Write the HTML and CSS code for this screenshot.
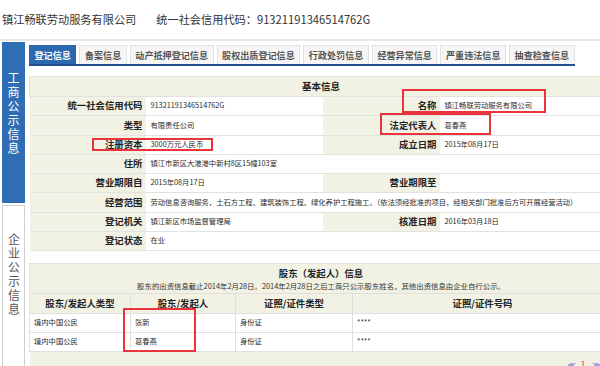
FILE: index.html
```html
<!DOCTYPE html>
<html lang="zh-CN">
<head>
    <meta charset="UTF-8">
    <title>镇江畅联劳动服务有限公司</title>
    <link rel="stylesheet" href="styles.css">
</head>
<body>
    <div class="page">
        <div class="top">
            <span>镇江畅联劳动服务有限公司</span><span class="code">统一社会信用代码：91321191346514762G</span>
        </div>
        <div class="layout">
            <div class="side">
                <div class="side-box side-on">工商公示信息</div>
                <div class="side-box side-off">企业公示信息</div>
            </div>
            <div class="main">
                <div class="tabs">
                    <span class="tab tab-on">登记信息</span>
                    <span class="tab">备案信息</span>
                    <span class="tab">动产抵押登记信息</span>
                    <span class="tab">股权出质登记信息</span>
                    <span class="tab">行政处罚信息</span>
                    <span class="tab">经营异常信息</span>
                    <span class="tab">严重违法信息</span>
                    <span class="tab">抽查检查信息</span>
                </div>

                <table class="info">
                    <colgroup>
                        <col class="c-l1"><col class="c-v1"><col class="c-l2"><col class="c-v2">
                    </colgroup>
                    <tr class="head"><th colspan="4">基本信息</th></tr>
                    <tr>
                        <td class="lbl">统一社会信用代码</td><td class="val">91321191346514762G</td>
                        <td class="lbl">名称</td><td class="val">镇江畅联劳动服务有限公司</td>
                    </tr>
                    <tr>
                        <td class="lbl">类型</td><td class="val">有限责任公司</td>
                        <td class="lbl">法定代表人</td><td class="val">葛春燕</td>
                    </tr>
                    <tr>
                        <td class="lbl">注册资本</td><td class="val">3000万元人民币</td>
                        <td class="lbl">成立日期</td><td class="val">2015年08月17日</td>
                    </tr>
                    <tr>
                        <td class="lbl">住所</td><td class="val" colspan="3">镇江市新区大港港中新村8区15幢103室</td>
                    </tr>
                    <tr>
                        <td class="lbl">营业期限自</td><td class="val">2015年08月17日</td>
                        <td class="lbl">营业期限至</td><td class="val"></td>
                    </tr>
                    <tr>
                        <td class="lbl">经营范围</td><td class="val" colspan="3">劳动信息咨询服务，土石方工程、建筑装饰工程、绿化养护工程施工。（依法须经批准的项目，经相关部门批准后方可开展经营活动）</td>
                    </tr>
                    <tr>
                        <td class="lbl">登记机关</td><td class="val">镇江新区市场监督管理局</td>
                        <td class="lbl">核准日期</td><td class="val">2016年03月18日</td>
                    </tr>
                    <tr>
                        <td class="lbl">登记状态</td><td class="val" colspan="3">在业</td>
                    </tr>
                </table>

                <table class="holders">
                    <colgroup>
                        <col class="h-1"><col class="h-2"><col class="h-3"><col class="h-4">
                    </colgroup>
                    <tr class="title">
                        <th colspan="4">
                            <div class="title-main">股东（发起人）信息</div>
                            <div class="title-note">股东的出资信息截止2014年2月28日。2014年2月28日之后工商只公示股东姓名，其他出资信息由企业自行公示。</div>
                        </th>
                    </tr>
                    <tr class="cols">
                        <th>股东/发起人类型</th><th>股东/发起人</th><th>证照/证件类型</th><th>证照/证件号码</th>
                    </tr>
                    <tr class="row">
                        <td>境内中国公民</td><td>张新</td><td>身份证</td><td>****</td>
                    </tr>
                    <tr class="row">
                        <td>境内中国公民</td><td>葛春燕</td><td>身份证</td><td>****</td>
                    </tr>
                    <tr class="foot">
                        <td colspan="4"><a class="pg pg-arrow">&lt;&lt;</a><a class="pg pg-num">1</a><a class="pg pg-arrow">&gt;&gt;</a></td>
                    </tr>
                </table>
            </div>
        </div>

        <!-- red annotation boxes drawn over the screenshot -->
        <div class="mark mark-name"></div>
        <div class="mark mark-rep"></div>
        <div class="mark mark-cap"></div>
        <div class="mark mark-holder"></div>
    </div>
</body>
</html>
```

FILE: styles.css
```css
body {
    margin: 0;
    font-family: "Noto Sans CJK SC", "Liberation Sans", sans-serif;
    color: #333;
    background: #fff;
    overflow: hidden;
}
.page {
    position: relative;
    width: 620px;
}
.top {
    height: 39px;
    line-height: 38px;
    padding-left: 2px;
    font-size: 11.2px;
    color: #333;
    border-bottom: 2px solid #e8e8e8;
    white-space: nowrap;
}
.top .code { margin-left: 20px; }

.layout { display: flex; }
.side {
    width: 23px;
    margin-left: 2px;
    padding-top: 1px;
    display: flex;
    flex-direction: column;
    gap: 2px;
    flex-shrink: 0;
}
.side-box {
    box-sizing: border-box;
    font-size: 12px;
    line-height: 14px;
    text-align: center;
}
.side-on {
    height: 161px;
    padding: 29px 5px 0;
    background: #2f6db4;
    color: #fff;
}
.side-off {
    height: 175px;
    padding: 26px 5px 0;
    border: 1px solid #d0d0d0;
    color: #555;
}

.main {
    width: 583px;
    margin-left: 4px;
    padding-top: 4px;
    flex-shrink: 0;
    line-height: 1;
}
.tabs {
    display: flex;
    width: max-content;
    gap: 3px;
    border-bottom: 2px solid #23508a;
}
.tab {
    padding: 0 4.5px;
    line-height: 18px;
    font-size: 9.1px;
    font-weight: bold;
    color: #555;
    background: #f6f6f6;
    border: 1px solid #e2e2e2;
    border-bottom: none;
    white-space: nowrap;
}
.tab-on {
    background: #2d68ae;
    border-color: #2d68ae;
    color: #fff;
}

table {
    width: 583px;
    border-collapse: collapse;
    table-layout: fixed;
}
td, th { padding: 0; }

.info { margin-top: 10px; }
.c-l1 { width: 116px; }
.c-v1 { width: 177px; }
.c-l2 { width: 117px; }
.c-v2 { width: 173px; }
.info tr { height: 19.25px; }
.info .head { height: 20px; }
.info th {
    background: #f1f1e4;
    font-size: 9.5px;
    font-weight: bold;
    color: #222;
    border: 1px solid #e2e2e2;
}
.info td {
    border-bottom: 1px solid #e2e2e2;
    white-space: nowrap;
    overflow: hidden;
}
.lbl {
    background: #f1f1e4;
    text-align: right;
    padding-right: 3px;
    font-size: 9.4px;
    font-weight: bold;
    color: #222;
}
.val {
    background: #fff;
    padding-left: 5px;
    font-size: 7.3px;
    color: #2a2a2a;
}

.holders { margin-top: 12px; }
.h-1 { width: 101px; }
.h-2 { width: 105px; }
.h-3 { width: 117px; }
.h-4 { width: 260px; }
.holders th {
    background: #f1f1e4;
    color: #222;
    font-weight: bold;
    border: 1px solid #e0e0e0;
}
.title { height: 30px; }
.title-main {
    font-size: 9.4px;
    line-height: 13px;
    padding-top: 2px;
}
.title-note {
    font-size: 7.4px;
    font-weight: normal;
    line-height: 12px;
    color: #333;
}
.cols { height: 20px; }
.cols th { font-size: 9.4px; }
.row { height: 19px; }
.row td {
    padding-left: 4px;
    font-size: 7.3px;
    color: #2a2a2a;
    border: 1px solid #e0e0e0;
}
.foot { height: 20px; }
.foot td {
    background: #f1f1e4;
    text-align: right;
    padding-right: 14px;
    vertical-align: bottom;
    line-height: 14px;
}
.pg {
    font-size: 9px;
    text-decoration: underline;
    margin-left: 7px;
}
.pg-arrow {
    color: #5b5bd6;
    letter-spacing: -2px;
}
.pg-num { color: #e23b3b; }

.mark {
    position: absolute;
    box-sizing: border-box;
    border: 2px solid #e8343a;
}
.mark-name { left: 402px; top: 89px; width: 144px; height: 24px; }
.mark-rep { left: 380px; top: 113px; width: 111px; height: 22px; }
.mark-cap { left: 92px; top: 138px; width: 121px; height: 13px; }
.mark-holder { left: 123px; top: 308px; width: 73px; height: 44px; }
```
